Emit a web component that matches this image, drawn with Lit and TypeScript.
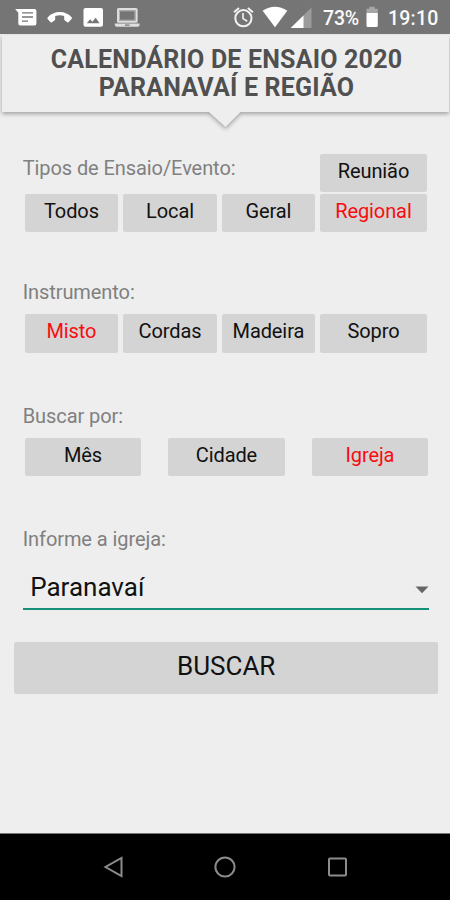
import { LitElement, html, svg, css } from "lit";
import { customElement, property, state } from "lit/decorators.js";
import { classMap } from "lit/directives/class-map.js";

@customElement("status-bar")
class StatusBar extends LitElement {
  static styles = css`
    :host { display: block; height: 34px; background: #757575; color: #fafafa; }
    .bar { display: flex; height: 34px; align-items: stretch; }
    svg { display: block; flex: none; }
    .text { font: 500 19.5px/37px Roboto, sans-serif; white-space: nowrap; }
    .percent { width: 41px; margin-left: 3px; letter-spacing: -0.2px; }
    .clock { margin-left: 2px; letter-spacing: 0.2px; }
  `;
  render() {
    return html`<div class="bar">
      <svg width="320" height="34" viewBox="0 0 320 34">
        <path fill="#fff" fill-rule="evenodd" d="M15.2 9H34.5Q36.4 9 36.4 11V23.6Q36.4 25.6 34.5 25.6H20.2Q18.3 25.6 18.3 23.6V12.8ZM22 12.2V13.6H33V12.2ZM22 16.3V17.7H33V16.3ZM22 20.4V21.8H28V20.4Z"/>
        <path fill="#fff" d="M47.6 17.6C53.5 10.2 66 10.2 71.8 17.6Q72.2 18.2 71.7 18.8L68.5 22.3Q68 22.8 67.3 22.3L64.6 20.2Q64.2 19.8 64.2 19.2V16Q59.7 14.7 55.2 16V19.2Q55.2 19.8 54.8 20.2L51.8 22.3Q51.1 22.8 50.6 22.3L47.6 18.9Q47.2 18.2 47.6 17.6Z"/>
        <path fill="#fff" fill-rule="evenodd" d="M85.5 8H101Q103 8 103 10V24.8Q103 26.8 101 26.8H85.5Q83.5 26.8 83.5 24.8V10Q83.5 8 85.5 8ZM86.8 23.2H99.6L95.6 17.8L92.4 21.8L90.1 19.2Z"/>
        <path fill="#dedede" fill-rule="evenodd" d="M118.5 8H136Q137.6 8 137.6 9.6V21.4Q137.6 22.8 136 22.8H118.5Q117 22.8 117 21.4V9.6Q117 8 118.5 8ZM119 10.3V20.7H135.5V10.3ZM114.8 23.6H139.6V25Q139.6 26.8 137.6 26.8H116.8Q114.8 26.8 114.8 25ZM125 24.6V25.8H129.5V24.6Z"/>
        <path fill="none" stroke="#b4b4b4" d="M119.5 10.8H135V20.2H119.5Z"/>
        <g fill="none" stroke="#f2f2f2" stroke-width="2">
          <circle cx="243.4" cy="18.2" r="8.1"/>
          <path d="M234 12.2L239 8M252.9 12.2L247.9 8"/>
          <path stroke-width="1.6" d="M243 13V18.6L247.3 21.2"/>
        </g>
        <path fill="#fff" d="M262.6 10.8Q275 2.8 287.3 10.8L275 27.3Z"/>
        <path fill="#9c9c9c" d="M311.5 7.5V28H290.7Z"/>
        <path fill="#fff" d="M303.5 15.4V28H290.7Z"/>
      </svg>
      <span class="text percent">73%</span>
      <svg width="22" height="34" viewBox="0 0 22 34">
        <path fill="#a6a6a6" d="M2.5 13V8.7H5.3V6.7H10.8V8.7H13.8V13Z"/>
        <path fill="#fff" d="M2.5 13H13.8V25.5Q13.8 27 12.4 27H3.9Q2.5 27 2.5 25.5Z"/>
      </svg>
      <span class="text clock">19:10</span>
    </div>`;
  }
}

@customElement("title-banner")
class TitleBanner extends LitElement {
  static styles = css`
    :host { display: grid; height: 104px; overflow: hidden; }
    svg, h1 { grid-area: 1 / 1; }
    svg { display: block; }
    .shape { fill: #eeeeee; filter: drop-shadow(0 2px 2px rgba(0, 0, 0, 0.32)); }
    h1 {
      margin: 12px 0 0; z-index: 1; padding-left: 3px; text-align: center;
      color: #505050; font: 700 25px/28px Roboto, sans-serif; white-space: nowrap;
      letter-spacing: 0.2px;
    }
    .line { display: block; }
  `;
  render() {
    return html`
      <svg width="450" height="104" viewBox="0 0 450 104">
        ${svg`<path class="shape" d="M2 1H449V78H240.5L225.5 93L209 78H2Z"/>`}
      </svg>
      <h1><span class="line">CALENDÁRIO DE ENSAIO 2020</span><span class="line">PARANAVAÍ E REGIÃO</span></h1>
    `;
  }
}

@customElement("option-button")
class OptionButton extends LitElement {
  @property() label = "";
  @property({ type: Boolean }) selected = false;
  static styles = css`
    :host { display: block; height: 38.5px; }
    button {
      display: block; width: 100%; height: 100%; padding: 0 0 3px; border: 0;
      border-radius: 2px; background: #d4d4d4; color: #111;
      font: 400 20px/35px Roboto, sans-serif; letter-spacing: -0.1px; white-space: nowrap;
    }
    .selected { color: #f80c10; }
  `;
  render() {
    return html`<button class=${classMap({ selected: this.selected })}>${this.label}</button>`;
  }
}

@customElement("app-root")
class AppRoot extends LitElement {
  @state() private kind = "Regional";
  @state() private instrument = "Misto";
  @state() private searchBy = "Igreja";

  static styles = css`
    :host {
      display: flex; flex-direction: column; width: 450px; height: 900px;
      background: #eeeeee; font-family: Roboto, sans-serif; overflow: hidden;
    }
    main { flex: 1; padding: 15.5px 22px 0 24.7px; }
    .label {
      color: #808080; font-size: 20px; line-height: 28px; height: 30px;
      margin-left: -2px; letter-spacing: -0.08px; white-space: nowrap;
    }
    .row { display: grid; }
    .four { grid-template-columns: 93.5px 93.5px 93px 107px; column-gap: 5.1px; }
    .head { grid-template-columns: 1fr 107px; margin-bottom: 1.5px; width: 402.3px; }
    .three { grid-template-columns: repeat(3, 116.5px); column-gap: 27px; }
    .gap { margin-top: 46px; }
    .gap + .row { margin-top: 6px; }
    .row + .gap ~ .gap { margin-top: 49px; }
    .select {
      display: flex; align-items: center; justify-content: space-between;
      box-sizing: border-box; width: 406.5px; height: 43px; margin: 12.3px 0 0 -2px;
      padding: 0 0 0 7.5px; border-bottom: 2.5px solid #168f78; color: #111;
      font-size: 26px; line-height: 40px;
    }
    .value { margin-top: -2px; }
    .select svg { margin-top: 4px; }
    .submit {
      display: block; width: 424px; height: 52px; margin: 31.5px 0 0 -10.5px; padding: 0 0 4px;
      border: 0; border-radius: 2px; background: #d4d4d4; color: #111;
      font: 400 26px/48px Roboto, sans-serif;
    }
    nav {
      height: 66px; background: #000; border-top: 1px solid #777;
      display: flex; justify-content: center; gap: 88px; align-items: center;
    }
    nav svg { display: block; fill: none; stroke: #8c8c8c; stroke-width: 2; }
  `;

  private option(label: string, current: string, pick: (v: string) => void) {
    return html`<option-button .label=${label} .selected=${label === current} @click=${() => pick(label)}></option-button>`;
  }

  render() {
    const kind = (v: string) => (this.kind = v);
    const instrument = (v: string) => (this.instrument = v);
    const search = (v: string) => (this.searchBy = v);
    return html`
      <status-bar></status-bar>
      <title-banner></title-banner>
      <main>
        <div class="row head">
          <div class="label">Tipos de Ensaio/Evento:</div>
          ${this.option("Reunião", this.kind, kind)}
        </div>
        <div class="row four">
          ${["Todos", "Local", "Geral", "Regional"].map((l) => this.option(l, this.kind, kind))}
        </div>
        <div class="label gap">Instrumento:</div>
        <div class="row four">
          ${["Misto", "Cordas", "Madeira", "Sopro"].map((l) => this.option(l, this.instrument, instrument))}
        </div>
        <div class="label gap">Buscar por:</div>
        <div class="row three">
          ${["Mês", "Cidade", "Igreja"].map((l) => this.option(l, this.searchBy, search))}
        </div>
        <div class="label gap">Informe a igreja:</div>
        <div class="select">
          <span class="value">Paranavaí</span>
          <svg width="14" height="8" viewBox="0 0 14 8"><path fill="#666" d="M0.5 0.5H13.5L7 7.3Z"/></svg>
        </div>
        <button class="submit">BUSCAR</button>
      </main>
      <nav>
        <svg width="24" height="24" viewBox="0 0 24 24"><path d="M20.5 3V21L4.5 12Z"/></svg>
        <svg width="24" height="24" viewBox="0 0 24 24"><circle cx="12" cy="12" r="9.6"/></svg>
        <svg width="24" height="24" viewBox="0 0 24 24"><rect x="4" y="3.5" width="17" height="17" rx="1"/></svg>
      </nav>
    `;
  }
}
